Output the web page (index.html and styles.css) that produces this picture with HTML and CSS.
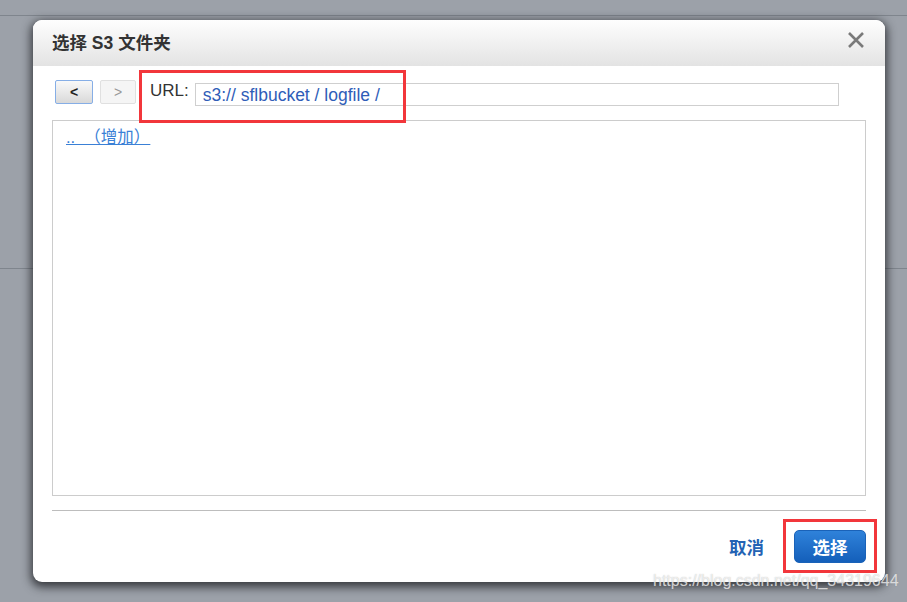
FILE: index.html
```html
<!DOCTYPE html>
<html lang="zh">
<head>
<meta charset="utf-8">
<title>选择 S3 文件夹</title>
<link rel="stylesheet" href="styles.css">
</head>
<body>
<div class="backdrop"></div>
<div class="dialog">
  <div class="dialog-header">
    <h2 class="dialog-title">选择 S3 文件夹</h2>
    <span class="close">
      <svg width="18" height="18" viewBox="0 0 18 18"><path d="M2 2 L16 16 M16 2 L2 16" stroke="#7a7a7a" stroke-width="2.6" stroke-linecap="butt" fill="none"/></svg>
    </span>
  </div>
  <div class="dialog-body">
    <div class="nav-row">
      <button class="nav-btn back">&lt;</button>
      <button class="nav-btn fwd">&gt;</button>
      <span class="url-label">URL:</span>
      <div class="url-input">s3:// sflbucket / logfile /</div>
    </div>
    <div class="list-box">
      <a class="list-link" href="#">..&nbsp;&nbsp;（增加）</a>
    </div>
    <div class="separator"></div>
    <div class="footer">
      <a class="cancel" href="#">取消</a>
      <button class="select-btn">选择</button>
    </div>
  </div>
  <div class="mark mark-url"></div>
  <div class="mark mark-btn"></div>
</div>
<div class="watermark">https://blog.csdn.net/qq_34319644</div>
</body>
</html>
```

FILE: styles.css
```css
html, body {
  margin: 0;
  padding: 0;
  width: 907px;
  height: 602px;
  overflow: hidden;
}
body {
  background: #9ca1a9;
  font-family: "Liberation Sans", "Noto Sans CJK SC", Arial, sans-serif;
  position: relative;
}
.backdrop {
  position: absolute;
  inset: 0;
  background:
    linear-gradient(#7f858d, #7f858d) 0 15px / 100% 1px no-repeat,
    linear-gradient(#7f858d, #7f858d) 0 268px / 100% 1px no-repeat;
}
.dialog {
  position: absolute;
  left: 33px;
  top: 20px;
  width: 852px;
  height: 562px;
  background: #fff;
  border-radius: 9px;
  box-shadow: 0 3px 10px 2px rgba(20, 22, 26, 0.75);
  display: flex;
  flex-direction: column;
}
.dialog-header {
  height: 46px;
  flex: none;
  border-radius: 9px 9px 0 0;
  background: linear-gradient(#fefefe, #e3e3e3);
  display: flex;
  align-items: center;
  justify-content: space-between;
  padding: 0 20px 0 19px;
}
.dialog-title {
  margin: -3px 0 0;
  font-size: 17.5px;
  font-weight: bold;
  color: #333;
  font-family: "Liberation Sans", "Noto Sans CJK SC", sans-serif;
}
.close {
  display: flex;
  width: 18px;
  height: 18px;
  margin-top: -6px;
}
.dialog-body {
  flex: 1;
  padding: 14px 19px 0;
  display: flex;
  flex-direction: column;
}
.nav-row {
  display: flex;
  align-items: flex-start;
  height: 26px;
  margin-bottom: 14px;
}
.nav-btn {
  height: 24px;
  padding: 0;
  font-family: "Liberation Sans", sans-serif;
  font-size: 14px;
  border-radius: 2px;
  line-height: 20px;
}
.back {
  margin-left: 3px;
  width: 38px;
  border: 1px solid #86aee6;
  background: linear-gradient(#f9f9f9, #d9d9d9);
  color: #222;
  font-weight: bold;
}
.fwd {
  margin-left: 7px;
  width: 36px;
  border: 1px solid #e0e0e0;
  background: #f5f5f5;
  color: #999;
}
.url-label {
  margin-left: 14px;
  font-size: 17px;
  color: #333;
  line-height: 21px;
}
.url-input {
  margin-left: 6px;
  margin-top: 3px;
  width: 644px;
  height: 23px;
  box-sizing: border-box;
  border: 1px solid #cfcfcf;
  font-size: 17.5px;
  line-height: 22px;
  color: #2f5db8;
  padding-left: 7px;
}
.list-box {
  height: 376px;
  box-sizing: border-box;
  border: 1px solid #cccccc;
  padding: 3px 13px;
}
.list-link {
  font-size: 16.5px;
  color: #3a80d6;
  text-decoration: underline;
  font-family: "Liberation Sans", "Noto Sans CJK SC", sans-serif;
}
.separator {
  margin-top: 14px;
  height: 1px;
  background: #bdbdbd;
}
.footer {
  display: flex;
  justify-content: flex-end;
  align-items: center;
  padding-top: 19px;
}
.cancel {
  font-size: 17.5px;
  font-weight: bold;
  color: #2463b4;
  text-decoration: none;
  margin-right: 30px;
  font-family: "Noto Sans CJK SC", sans-serif;
}
.select-btn {
  width: 72px;
  height: 33px;
  border: 1px solid #1a62b8;
  border-radius: 5px;
  background: linear-gradient(#2f82da, #145fba);
  color: #fff;
  font-size: 17.5px;
  font-weight: bold;
  font-family: "Noto Sans CJK SC", sans-serif;
  padding: 0;
}
.mark {
  position: absolute;
  border: 3px solid #f2363b;
  box-sizing: border-box;
}
.mark-url {
  left: 106px;
  top: 50px;
  width: 267px;
  height: 53px;
}
.mark-btn {
  left: 750px;
  top: 499px;
  width: 94px;
  height: 54px;
}
.watermark {
  position: absolute;
  left: 653px;
  top: 572px;
  font-size: 16px;
  color: rgba(255, 255, 255, 0.7);
  text-shadow: 0 0 1px rgba(120, 120, 120, 0.5);
  font-family: "Liberation Sans", sans-serif;
}
```
